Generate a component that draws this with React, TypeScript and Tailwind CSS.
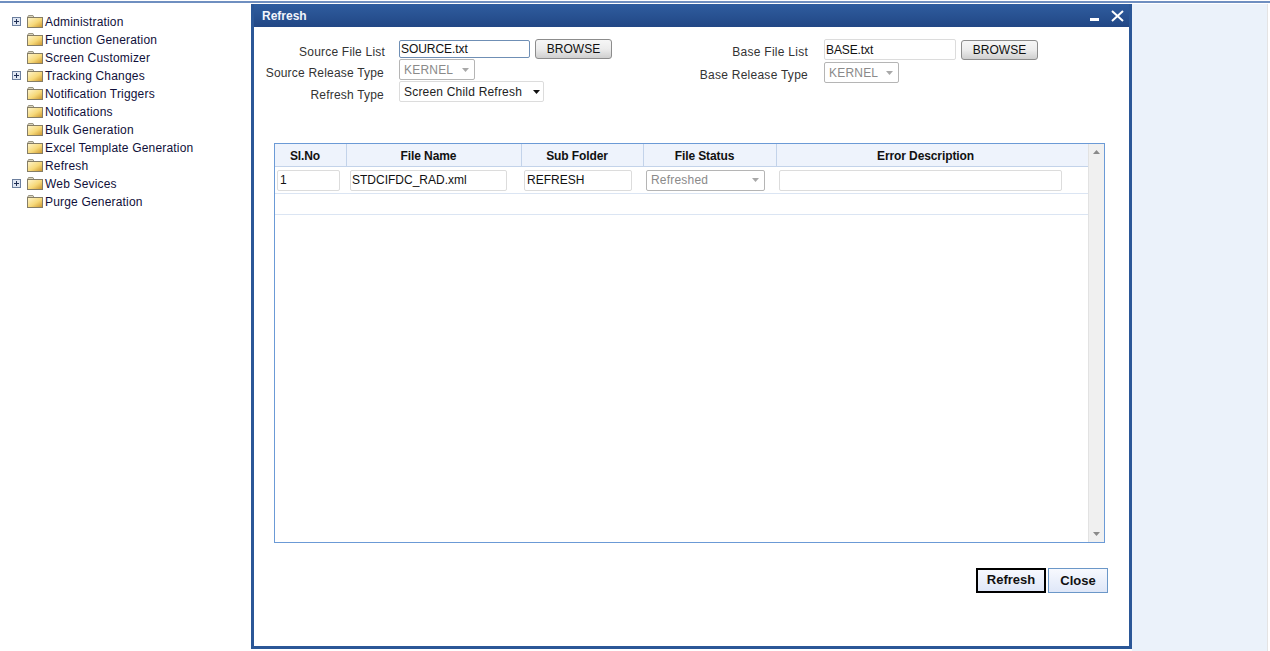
const font = "font-['Liberation_Sans',Arial,sans-serif]";

const treeItems = [
  { label: 'Administration', expandable: true },
  { label: 'Function Generation' },
  { label: 'Screen Customizer' },
  { label: 'Tracking Changes', expandable: true },
  { label: 'Notification Triggers' },
  { label: 'Notifications' },
  { label: 'Bulk Generation' },
  { label: 'Excel Template Generation' },
  { label: 'Refresh' },
  { label: 'Web Sevices', expandable: true },
  { label: 'Purge Generation' },
];

const columns = 'grid grid-cols-[72px_175px_122px_133px_311px]';

function PlusBox() {
  return (
    <svg width="9" height="9" viewBox="0 0 9 9" className="block">
      <rect x="0.5" y="0.5" width="8" height="8" fill="#dfe6f2" stroke="#6c7f9e" />
      <path d="M2 4.5h5M4.5 2v5" stroke="#1f2f55" strokeWidth="1" />
    </svg>
  );
}

function Folder() {
  return (
    <svg width="16" height="13" viewBox="0 0 16 13" className="mb-[2px] block">
      <defs>
        <linearGradient id="folderFill" x1="0" y1="0" x2="1" y2="1">
          <stop offset="0" stopColor="#fff6cf" />
          <stop offset="0.55" stopColor="#f6d878" />
          <stop offset="1" stopColor="#c9922a" />
        </linearGradient>
      </defs>
      <path d="M0.5 2.5 L1.5 0.5 H6 L7 2.5 Z" fill="#d9d3bd" stroke="#9a9684" strokeWidth="1" />
      <rect x="0.5" y="2.5" width="15" height="10" fill="url(#folderFill)" stroke="#857d66" strokeWidth="1" />
    </svg>
  );
}

function Caret({ color = '#a8a8a8' }: { color?: string }) {
  return (
    <svg width="7" height="4" viewBox="0 0 7 4" className="block">
      <path d="M0 0h7L3.5 4z" fill={color} />
    </svg>
  );
}

function Browse({ className = '' }: { className?: string }) {
  return (
    <button className={`h-[20px] w-[77px] rounded-[3px] border border-[#8c8c8c] bg-gradient-to-b from-[#f6f6f6] via-[#ececec] to-[#cfcfcf] text-[12px] text-[#111] ${className}`}>
      BROWSE
    </button>
  );
}

function DisabledSelect({ value, className = '' }: { value: string; className?: string }) {
  return (
    <div className={`flex h-[21px] items-center justify-between rounded-[2px] border border-[#b5b5b5] bg-white pl-[4px] pr-[5px] text-[12px] tracking-[0.2px] text-[#8a8a8a] ${className}`}>
      {value}
      <Caret />
    </div>
  );
}

function Field({ value, className = '' }: { value: string; className?: string }) {
  return (
    <input
      readOnly
      value={value}
      className={`h-[21px] rounded-[2px] border border-[#dcdcdc] bg-white px-px text-[12px] text-[#111] outline-none ${className}`}
    />
  );
}

export default function App() {
  return (
    <div className={`${font} flex h-[651px] w-[1270px] flex-col overflow-hidden bg-white text-[12px]`}>
      <div className="h-[2px] shrink-0 mt-px bg-[#6f8fc0]" />
      <div className="h-px shrink-0" />

      <div className="flex min-h-0 flex-1">
        {/* Tree */}
        <div className="w-[251px] shrink-0 pl-[12px] pt-[9px]">
          {treeItems.map((item) => (
            <div key={item.label} className="flex h-[18px] items-center">
              <div className="mb-[2px] w-[15px]">{item.expandable && <PlusBox />}</div>
              <Folder />
              <span className="ml-[2px] text-[12px] tracking-[0.18px] text-[#10103a]">{item.label}</span>
            </div>
          ))}
        </div>

        {/* Dialog */}
        <div className="mb-[2px] flex w-[881px] shrink-0 flex-col border-x-[3px] border-b-[3px] border-[#2b5797] bg-white">
          <div className="flex h-[23px] shrink-0 items-center justify-between bg-gradient-to-b from-[#2f5d9f] to-[#224785] pl-[8px] pr-[5px]">
            <span className="text-[12px] font-bold text-[#f2f5fb]">Refresh</span>
            <div className="flex items-center gap-[12px]">
              <div className="mt-[7px] h-[3px] w-[9px] bg-white" />
              <svg width="13" height="12" viewBox="0 0 13 12" className="block">
                <path d="M1 1l11 10M12 1L1 11" stroke="white" strokeWidth="2" />
              </svg>
            </div>
          </div>

          {/* Form */}
          <div className="flex pt-[12px] text-[#333]">
            <div className="w-[425px]">
              <div className="flex h-[20px] items-center">
                <label className="w-[131px] pt-[6px] text-right tracking-[0.2px]">Source File List</label>
                <Field value="SOURCE.txt" className="ml-[14px] h-[18px]! w-[131px] border-[#6f8fb5]! px-0 tracking-[-0.05px]" />
                <Browse className="ml-[5px]" />
              </div>
              <div className="flex h-[21px] items-center">
                <label className="w-[130px] pt-[6px] text-right tracking-[0.2px]">Source Release Type</label>
                <DisabledSelect value="KERNEL" className="ml-[15px] w-[76px]" />
              </div>
              <div className="mt-px flex h-[21px] items-center">
                <label className="w-[130px] pt-[7px] text-right tracking-[0.2px]">Refresh Type</label>
                <div className="ml-[15px] flex h-[21px] w-[145px] items-center justify-between rounded-[2px] border border-[#dcdcdc] pl-[4px] pr-[3px] tracking-[0.2px] text-[#222]">
                  Screen Child Refresh
                  <Caret color="#111" />
                </div>
              </div>
            </div>
            <div>
              <div className="flex h-[21px] items-center">
                <label className="w-[130px] pt-[4px] pr-px text-right tracking-[0.26px]">Base File List</label>
                <Field value="BASE.txt" className="ml-[15px] w-[132px] pl-px tracking-[-0.1px]" />
                <Browse className="ml-[5px]" />
              </div>
              <div className="mt-[2px] flex h-[21px] items-center">
                <label className="w-[130px] pt-[4px] pr-px text-right tracking-[0.26px]">Base Release Type</label>
                <DisabledSelect value="KERNEL" className="ml-[15px] w-[75px] pl-[3px]" />
              </div>
            </div>
          </div>

          {/* Grid */}
          <div className="ml-[20px] mt-[41px] flex h-[400px] w-[831px] border border-[#6b9ad6]">
            <div className="w-[813px]">
              <div className={`${columns} h-[23px] border-b border-[#c3d3ea] bg-[#eef3fc] text-center font-bold tracking-[-0.1px] text-[#111]`}>
                {['Sl.No', 'File Name', 'Sub Folder', 'File Status', 'Error Description'].map((h, i) => (
                  <div key={h} className={`flex items-center justify-center pt-px ${i === 4 ? 'pr-[14px]' : 'border-r border-[#c3d3ea] pr-[11px]'}`}>
                    {h}
                  </div>
                ))}
              </div>
              <div className={`${columns} h-[27px] items-center border-b border-[#dbe5f3]`}>
                <div className="pl-[2px]"><Field value="1" className="w-[63px] pl-[2px]" /></div>
                <div className="pl-[3px]"><Field value="STDCIFDC_RAD.xml" className="w-[157px] pl-px" /></div>
                <div className="pl-[2px]"><Field value="REFRESH" className="w-[108px] pl-[2px]" /></div>
                <div className="pl-[2px]"><DisabledSelect value="Refreshed" className="w-[119px]" /></div>
                <div className="pl-[2px]"><Field value="" className="w-[283px]" /></div>
              </div>
              <div className="h-[21px] border-b border-[#dbe5f3]" />
            </div>
            <div className="flex w-[16px] flex-col items-center justify-between border-l border-[#e2e2e2] bg-[#f0f0f0] py-[6px]">
              <svg width="7" height="4" viewBox="0 0 7 4" className="block"><path d="M0 4h7L3.5 0z" fill="#8a8a8a" /></svg>
              <svg width="7" height="4" viewBox="0 0 7 4" className="block"><path d="M0 0h7L3.5 4z" fill="#8a8a8a" /></svg>
            </div>
          </div>

          {/* Actions */}
          <div className="ml-[722px] mt-[25px] flex gap-[2px] text-[13px]">
            <button className="h-[25px] w-[70px] border-2 border-black bg-gradient-to-b from-[#f7f9fe] to-[#dfe7f8] pb-[2px] font-bold text-[#111]">
              Refresh
            </button>
            <button className="h-[25px] w-[60px] border border-[#6b97c8] bg-gradient-to-b from-[#f7f9fe] to-[#dfe7f8] pt-px font-bold text-[#111]">
              Close
            </button>
          </div>
        </div>

        <div className="w-[136px] shrink-0 border-r border-[#e4e4e4] bg-[#ebf2fa]" />
      </div>
    </div>
  );
}
